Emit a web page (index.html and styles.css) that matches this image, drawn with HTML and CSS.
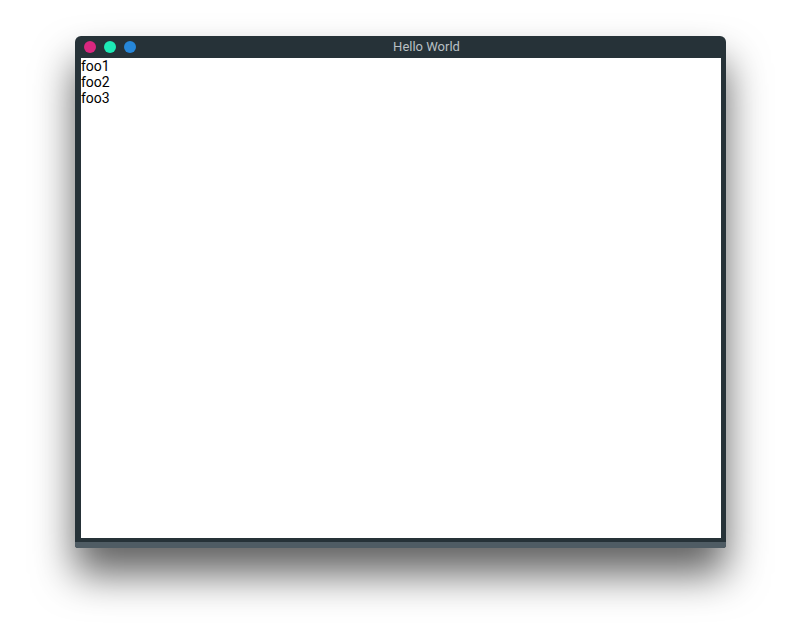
FILE: index.html
```html
<!DOCTYPE html>
<html>
<head>
<meta charset="utf-8">
<link rel="stylesheet" href="styles.css">
</head>
<body>
<div class="stage">
  <div class="window">
    <div class="titlebar">
      <div class="buttons">
        <span class="dot pink"></span>
        <span class="dot teal"></span>
        <span class="dot blue"></span>
      </div>
      <div class="title">Hello World</div>
    </div>
    <div class="content">
      <div class="line">foo1</div>
      <div class="line">foo2</div>
      <div class="line">foo3</div>
    </div>
    <div class="footer"></div>
  </div>
</div>
</body>
</html>
```
FILE: styles.css
```css
html, body {
  margin: 0;
  padding: 0;
  background: #ffffff;
}
.stage {
  width: 802px;
  height: 634px;
  padding: 36px 0 0 75px;
  box-sizing: border-box;
}
.window {
  width: 651px;
  height: 512px;
  background: #263238;
  border-radius: 6px 6px 3px 3px;
  box-shadow: 0 26px 40px rgba(0, 0, 0, 0.62);
  display: flex;
  flex-direction: column;
  overflow: hidden;
}
.titlebar {
  height: 22px;
  flex: none;
  position: relative;
  display: flex;
  align-items: center;
}
.buttons {
  display: flex;
  gap: 8px;
  padding-left: 9px;
}
.dot {
  width: 12px;
  height: 12px;
  border-radius: 50%;
  display: block;
}
.pink { background: #d9277f; }
.teal { background: #1de9b6; }
.blue { background: #2687d9; }
.title {
  position: absolute;
  left: 0;
  right: 0;
  top: 0;
  line-height: 22px;
  text-align: center;
  color: #b9c0c4;
  font-family: Roboto, "Liberation Sans", sans-serif;
  font-size: 13px;
  padding-left: 52px;
}
.content {
  flex: none;
  height: 480px;
  margin: 0 5px 0 6px;
  background: #ffffff;
  font-family: Roboto, "Liberation Sans", sans-serif;
  font-size: 14px;
  line-height: 16px;
  color: #000;
}
.line {
  padding-left: 0;
}
.footer {
  flex: none;
  margin-top: 4px;
  height: 6px;
  background: #4f5c64;
}
```
